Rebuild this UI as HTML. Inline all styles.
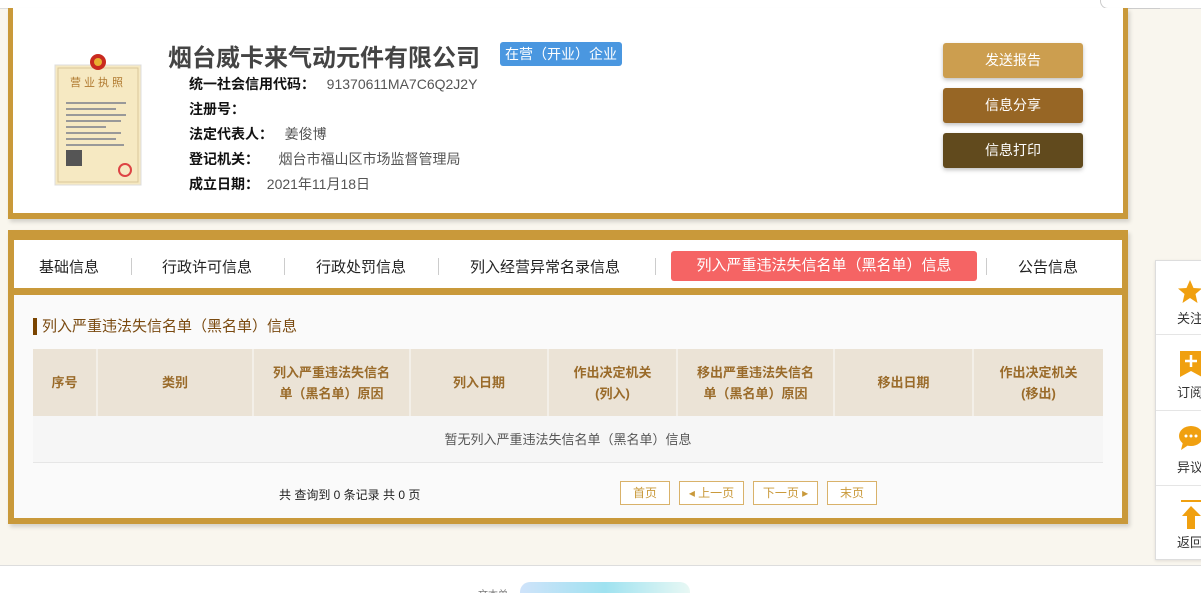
<!DOCTYPE html>
<html><head><meta charset="utf-8"><style>
*{margin:0;padding:0;box-sizing:border-box}
html,body{width:1201px;height:593px;overflow:hidden}
body{background:#f9f6ee;font-family:"Liberation Sans","Noto Sans CJK SC",sans-serif;position:relative;color:#333}
.abs{position:absolute;white-space:nowrap}
.topbar{left:0;top:0;width:1201px;height:9px;background:#fff;border-bottom:1px solid #ddd}
.card1{left:8px;top:8px;width:1120px;height:211px;background:#fff;border-left:5px solid #c9993a;border-right:5px solid #c9993a;border-bottom:6px solid #c9993a;box-shadow:2px 3px 4px rgba(0,0,0,.15)}
.title{left:168px;top:38px;font-size:24px;font-weight:bold;color:#444}
.badge{left:500px;top:42px;height:24px;padding:0 5px;background:#4a97e0;color:#fff;font-size:14px;line-height:24px;border-radius:3px}
.row{left:189px;font-size:14px;color:#222}
.row b{color:#111}
.row span{color:#555}
.btn{left:943px;width:140px;height:35px;color:#fff;font-size:14px;text-align:center;line-height:35px;border-radius:3px;box-shadow:0 2px 4px rgba(0,0,0,.25)}
.card2{left:8px;top:230px;width:1120px;height:294px;background:#fafafa;border:6px solid #c9993a;border-top-width:10px;box-shadow:2px 3px 4px rgba(0,0,0,.15)}
.tabs{left:14px;top:240px;width:1108px;height:55px;background:#fff;border-bottom:7px solid #c9993a}
.tab{top:256px;font-size:15px;color:#222}
.sep{top:258px;width:1px;height:17px;background:#ccc}
.active{left:671px;top:251px;width:306px;height:30px;background:#f56464;border-radius:3px;color:#fff;font-size:15px;text-align:center;line-height:30px}
.sec{left:33px;top:318px;font-size:15px;color:#7a4a10;border-left:4px solid #7a4400;padding-left:5px;line-height:17px}
table{position:absolute;left:33px;top:349px;width:1070px;border-collapse:collapse;font-size:13px}
th{background:#ebe3d6;color:#9a6b2a;font-weight:bold;height:67px;border-right:2px solid #f3efe8;line-height:21px}
td{height:46px;text-align:center;color:#555;background:#f6f6f6;border-bottom:1px solid #e6e6e6}
.pg{top:481px;height:24px;border:1px solid #d9b26a;color:#c9993a;font-size:12px;line-height:22px;text-align:center;background:#fff}
.side{left:1155px;top:260px;width:60px;height:300px;background:#fff;border:1px solid #ddd;box-shadow:0 1px 3px rgba(0,0,0,.1)}
.si{left:1177px;font-size:13px;color:#333}
.hl{left:1156px;width:50px;height:1px;background:#e5e5e5}
.bottom{left:0;top:565px;width:1201px;height:28px;background:#fff;border-top:1px solid #ddd;overflow:hidden}
</style></head><body>
<div class="abs topbar"></div>
<div class="abs" style="left:1100px;top:0;width:60px;height:9px;border-bottom:1px solid #ccc;border-left:1px solid #ccc;border-bottom-left-radius:8px;background:#fff"></div>
<div class="abs card1"></div>
<svg class="abs" style="left:52px;top:50px" width="92" height="138">
<rect x="3" y="15" width="86" height="120" fill="#f6e9c2" stroke="#ddd"/>
<rect x="6" y="18" width="80" height="114" fill="none" stroke="#d9c89a"/>
<circle cx="46" cy="12" r="8" fill="#c92a1f"/><circle cx="46" cy="12" r="4" fill="#e8b030"/>
<text x="46" y="36" font-size="11" text-anchor="middle" fill="#b07a30" font-family="Noto Sans CJK SC" letter-spacing="3">营业执照</text>
<g fill="#999"><rect x="14" y="52" width="60" height="2"/><rect x="14" y="58" width="50" height="2"/><rect x="14" y="64" width="60" height="2"/><rect x="14" y="70" width="55" height="2"/><rect x="14" y="76" width="40" height="2"/><rect x="14" y="82" width="55" height="2"/><rect x="14" y="88" width="50" height="2"/><rect x="14" y="94" width="58" height="2"/></g>
<rect x="14" y="100" width="16" height="16" fill="#555"/>
<circle cx="73" cy="120" r="6" fill="none" stroke="#d44" stroke-width="2"/>
</svg>
<div class="abs title">烟台威卡来气动元件有限公司</div>
<div class="abs badge">在营（开业）企业</div>
<div class="abs row" style="top:74px"><b>统一社会信用代码：</b>&nbsp;&nbsp;&nbsp;<span>91370611MA7C6Q2J2Y</span></div>
<div class="abs row" style="top:99px"><b>注册号：</b></div>
<div class="abs row" style="top:124px"><b>法定代表人：</b>&nbsp;&nbsp;&nbsp;<span>姜俊博</span></div>
<div class="abs row" style="top:149px"><b>登记机关：</b>&nbsp;&nbsp;&nbsp;&nbsp;&nbsp;<span>烟台市福山区市场监督管理局</span></div>
<div class="abs row" style="top:174px"><b>成立日期：</b>&nbsp;&nbsp;<span>2021年11月18日</span></div>
<div class="abs btn" style="top:43px;background:#cc9e4f">发送报告</div>
<div class="abs btn" style="top:88px;background:#976625">信息分享</div>
<div class="abs btn" style="top:133px;background:#614a1d">信息打印</div>

<div class="abs card2"></div>
<div class="abs tabs"></div>
<div class="abs tab" style="left:39px">基础信息</div>
<div class="abs sep" style="left:131px"></div>
<div class="abs tab" style="left:162px">行政许可信息</div>
<div class="abs sep" style="left:284px"></div>
<div class="abs tab" style="left:316px">行政处罚信息</div>
<div class="abs sep" style="left:438px"></div>
<div class="abs tab" style="left:470px">列入经营异常名录信息</div>
<div class="abs sep" style="left:655px"></div>
<div class="abs active">列入严重违法失信名单（黑名单）信息</div>
<div class="abs sep" style="left:986px"></div>
<div class="abs tab" style="left:1018px">公告信息</div>
<div class="abs sec">列入严重违法失信名单（黑名单）信息</div>
<table><tr>
<th style="width:64px">序号</th><th style="width:156px">类别</th><th style="width:157px">列入严重违法失信名<br>单（黑名单）原因</th><th style="width:138px">列入日期</th><th style="width:129px">作出决定机关<br>(列入)</th><th style="width:157px">移出严重违法失信名<br>单（黑名单）原因</th><th style="width:139px">移出日期</th><th style="border-right:none">作出决定机关<br>(移出)</th>
</tr><tr><td colspan="8">暂无列入严重违法失信名单（黑名单）信息</td></tr></table>
<div class="abs" style="left:279px;top:486px;font-size:12px;color:#222">共 查询到 0 条记录 共 0 页</div>
<div class="abs pg" style="left:620px;width:50px">首页</div>
<div class="abs pg" style="left:679px;width:65px">◂ 上一页</div>
<div class="abs pg" style="left:753px;width:65px">下一页 ▸</div>
<div class="abs pg" style="left:827px;width:50px">末页</div>

<div class="abs side"></div>
<svg class="abs" style="left:1177px;top:279px" width="26" height="26"><polygon points="13,1 16.5,9 25,9.5 18.5,15 20.5,24 13,19 5.5,24 7.5,15 1,9.5 9.5,9" fill="#f0a010"/></svg>
<div class="abs si" style="top:308px">关注</div>
<div class="abs hl" style="top:334px"></div>
<svg class="abs" style="left:1180px;top:351px" width="22" height="28"><path d="M0 0H22V26L11 20L0 26Z" fill="#f0a010"/><path d="M11 4V16M5 10H17" stroke="#fff" stroke-width="2.5"/></svg>
<div class="abs si" style="top:382px">订阅</div>
<div class="abs hl" style="top:410px"></div>
<svg class="abs" style="left:1178px;top:425px" width="26" height="26"><ellipse cx="13" cy="11" rx="12" ry="10" fill="#f0a010"/><path d="M5 17L3 25L12 19Z" fill="#f0a010"/><circle cx="8" cy="11" r="1.5" fill="#fff"/><circle cx="13" cy="11" r="1.5" fill="#fff"/><circle cx="18" cy="11" r="1.5" fill="#fff"/></svg>
<div class="abs si" style="top:457px">异议</div>
<div class="abs hl" style="top:485px"></div>
<svg class="abs" style="left:1181px;top:500px" width="22" height="30"><rect x="0" y="0" width="22" height="2" fill="#f0a010"/><path d="M10 6L1 16H6V29H14V16H20Z" fill="#f0a010"/></svg>
<div class="abs si" style="top:532px">返回</div>

<div class="abs bottom">
<div class="abs" style="left:478px;top:20px;font-size:10px;color:#777">文本单</div>
<div class="abs" style="left:520px;top:16px;width:170px;height:20px;border-radius:10px;background:linear-gradient(90deg,#cfe3fa,#9fe2f0,#e8f8f4)"></div>
</div>
</body></html>
